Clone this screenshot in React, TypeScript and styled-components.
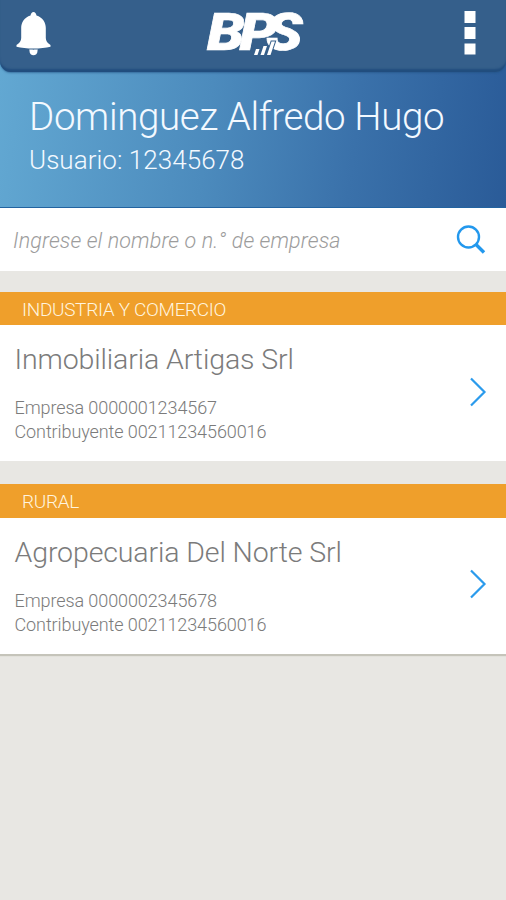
import React from "react";
import styled, { createGlobalStyle } from "styled-components";

const GlobalStyle = createGlobalStyle`
  * { box-sizing: border-box; }
  body { margin: 0; background: #e8e7e3; font-family: Roboto, "Liberation Sans", sans-serif; }
  h1, h2, h3, p { margin: 0; font-weight: 300; white-space: nowrap; }
`;

const Screen = styled.div`
  width: 506px;
  height: 900px;
  display: flex;
  flex-direction: column;
  background: #e8e7e3;
  overflow: hidden;
`;

const Top = styled.div`
  background: linear-gradient(97deg, #63a9d3 0%, #4c8bbd 42%, #3a71aa 70%, #2a5b98 100%);
  border-bottom: 1px solid #2263a0;
  height: 208px;
`;

const AppBar = styled.header`
  height: 72px;
  display: flex;
  align-items: flex-start;
  justify-content: space-between;
  padding: 0 30px 0 15px;
  background: #355f8b;
  border-radius: 0 0 11px 11px;
  box-shadow: inset 0 -4px 2px -1px #214d7e, 0 1px 2px rgba(31, 80, 130, 0.6);
`;

const IconButton = styled.button`
  display: flex;
  padding: 0;
  border: 0;
  background: none;
`;

const BarButton = styled(IconButton)`
  margin-top: 11px;
`;

const Logo = styled.svg`
  display: block;
  margin-right: 5px;
`;

const Wordmark = styled.text`
  font-family: Roboto, sans-serif;
  font-size: 51px;
  font-weight: 900;
  font-style: italic;
  stroke: #fff;
  stroke-width: 0.7px;
`;

const User = styled.section`
  padding: 23px 0 0 29px;
  color: #f3f9ff;
`;

const UserName = styled.h1`
  font-size: 38.5px;
  line-height: 44px;
  letter-spacing: -0.35px;
`;

const UserId = styled.p`
  margin-top: 6px;
  font-size: 26px;
  line-height: 30px;
  letter-spacing: 0.04px;
`;

const SearchBar = styled.label`
  height: 63px;
  display: flex;
  align-items: center;
  justify-content: space-between;
  padding: 0 20px 0 13px;
  background: #fff;
`;

const SearchInput = styled.input`
  width: 380px;
  padding: 2px 0 0;
  border: 0;
  outline: 0;
  font: italic 300 21.5px/26px Roboto, sans-serif;
  letter-spacing: 0.12px;
  &::placeholder { color: #9c9c9c; opacity: 1; }
`;

const Group = styled.section<{ $gap: number; $last?: boolean }>`
  margin-top: ${(p) => p.$gap}px;
  background: #fff;
  box-shadow: ${(p) => (p.$last ? "0 2px 1px #c5c4ba" : "none")};
`;

const GroupTitle = styled.h2`
  height: 33.5px;
  padding-left: 22px;
  background: #ef9f2b;
  color: #fff4df;
  font-size: 19px;
  line-height: 35px;
  letter-spacing: -0.33px;
`;

const Company = styled.article`
  height: 136.4px;
  display: flex;
  justify-content: space-between;
  padding: 18px 19px 0 14.5px;
  color: #7b7b7b;
`;

const CompanyName = styled.h3`
  margin-bottom: 19px;
  font-size: 28.5px;
  line-height: 34px;
  letter-spacing: -0.12px;
`;

const Detail = styled.p`
  font-size: 18px;
  line-height: 24px;
  letter-spacing: -0.09px;
`;

const ChevronButton = styled(IconButton)`
  align-self: flex-start;
  margin-top: 33.5px;
`;

const Bell = () => (
  <svg width="37" height="45" viewBox="0 0 37 45" fill="#fff">
    <path d="M18.500 1c-1.600 0-2.500 1.600-3 3.400C9.500 6.400 6.200 11 6.200 17v10c0 3-1.700 5-4.700 7v1.700c9 2.400 25 2.400 34 0V34c-3-2-4.700-4-4.700-7V17c0-6-3.300-10.600-9.300-12.600C21 2.600 20.100 1 18.500 1z" />
    <path d="M14.500 38.300c1.500.5 6.500.5 8 0 1 8-9 8-8 0z" />
  </svg>
);

const Dots = () => (
  <svg width="12" height="45" viewBox="0 0 12 45" fill="#fff">
    <path d="M.5 0h11v12H.5zM.5 16h11v12H.5zM.5 32.500h11v11H.5z" />
  </svg>
);

const BpsLogo = () => (
  <Logo width="106" height="68" viewBox="0 0 106 68" fill="#fff">
    <Wordmark x="3.500 31 53.500" y="50" transform="scale(1.180 1)">BPS</Wordmark>
    <path
      d="M51 55l2-6h3.500l-2 6zM57.500 55l3-9H64l-3 9zM64 55l4.500-13.500H72L67.500 55z"
      stroke="#355f8b"
      strokeWidth="2"
      paintOrder="stroke"
    />
  </Logo>
);

const Chevron = () => (
  <svg width="18" height="30" viewBox="0 0 18 30" fill="none" stroke="#2b9bec" strokeWidth="2.200">
    <path d="M2 1.500 15.500 15 2 28.500" />
  </svg>
);

const Magnifier = () => (
  <svg width="30" height="30" viewBox="0 0 30 30" fill="none" stroke="#2398ed">
    <circle cx="12.500" cy="12" r="10.500" strokeWidth="2.400" />
    <path d="M20 19.500 28 27.500" strokeWidth="3.400" />
  </svg>
);

const groups = [
  { title: "INDUSTRIA Y COMERCIO", name: "Inmobiliaria Artigas Srl", company: "0000001234567", taxpayer: "00211234560016", gap: 20.5 },
  { title: "RURAL", name: "Agropecuaria Del Norte Srl", company: "0000002345678", taxpayer: "00211234560016", gap: 22.8 },
];

export default function App() {
  return (
    <Screen>
      <GlobalStyle />
      <Top>
        <AppBar>
          <BarButton aria-label="Notificaciones"><Bell /></BarButton>
          <BpsLogo />
          <BarButton aria-label="Menú"><Dots /></BarButton>
        </AppBar>
        <User>
          <UserName>Dominguez Alfredo Hugo</UserName>
          <UserId>Usuario: 12345678</UserId>
        </User>
      </Top>
      <SearchBar>
        <SearchInput placeholder="Ingrese el nombre o n.° de empresa" />
        <Magnifier />
      </SearchBar>
      {groups.map((g, i) => (
        <Group key={g.title} $gap={g.gap} $last={i === groups.length - 1}>
          <GroupTitle>{g.title}</GroupTitle>
          <Company>
            <div>
              <CompanyName>{g.name}</CompanyName>
              <Detail>Empresa {g.company}</Detail>
              <Detail>Contribuyente {g.taxpayer}</Detail>
            </div>
            <ChevronButton aria-label="Ver empresa"><Chevron /></ChevronButton>
          </Company>
        </Group>
      ))}
    </Screen>
  );
}
